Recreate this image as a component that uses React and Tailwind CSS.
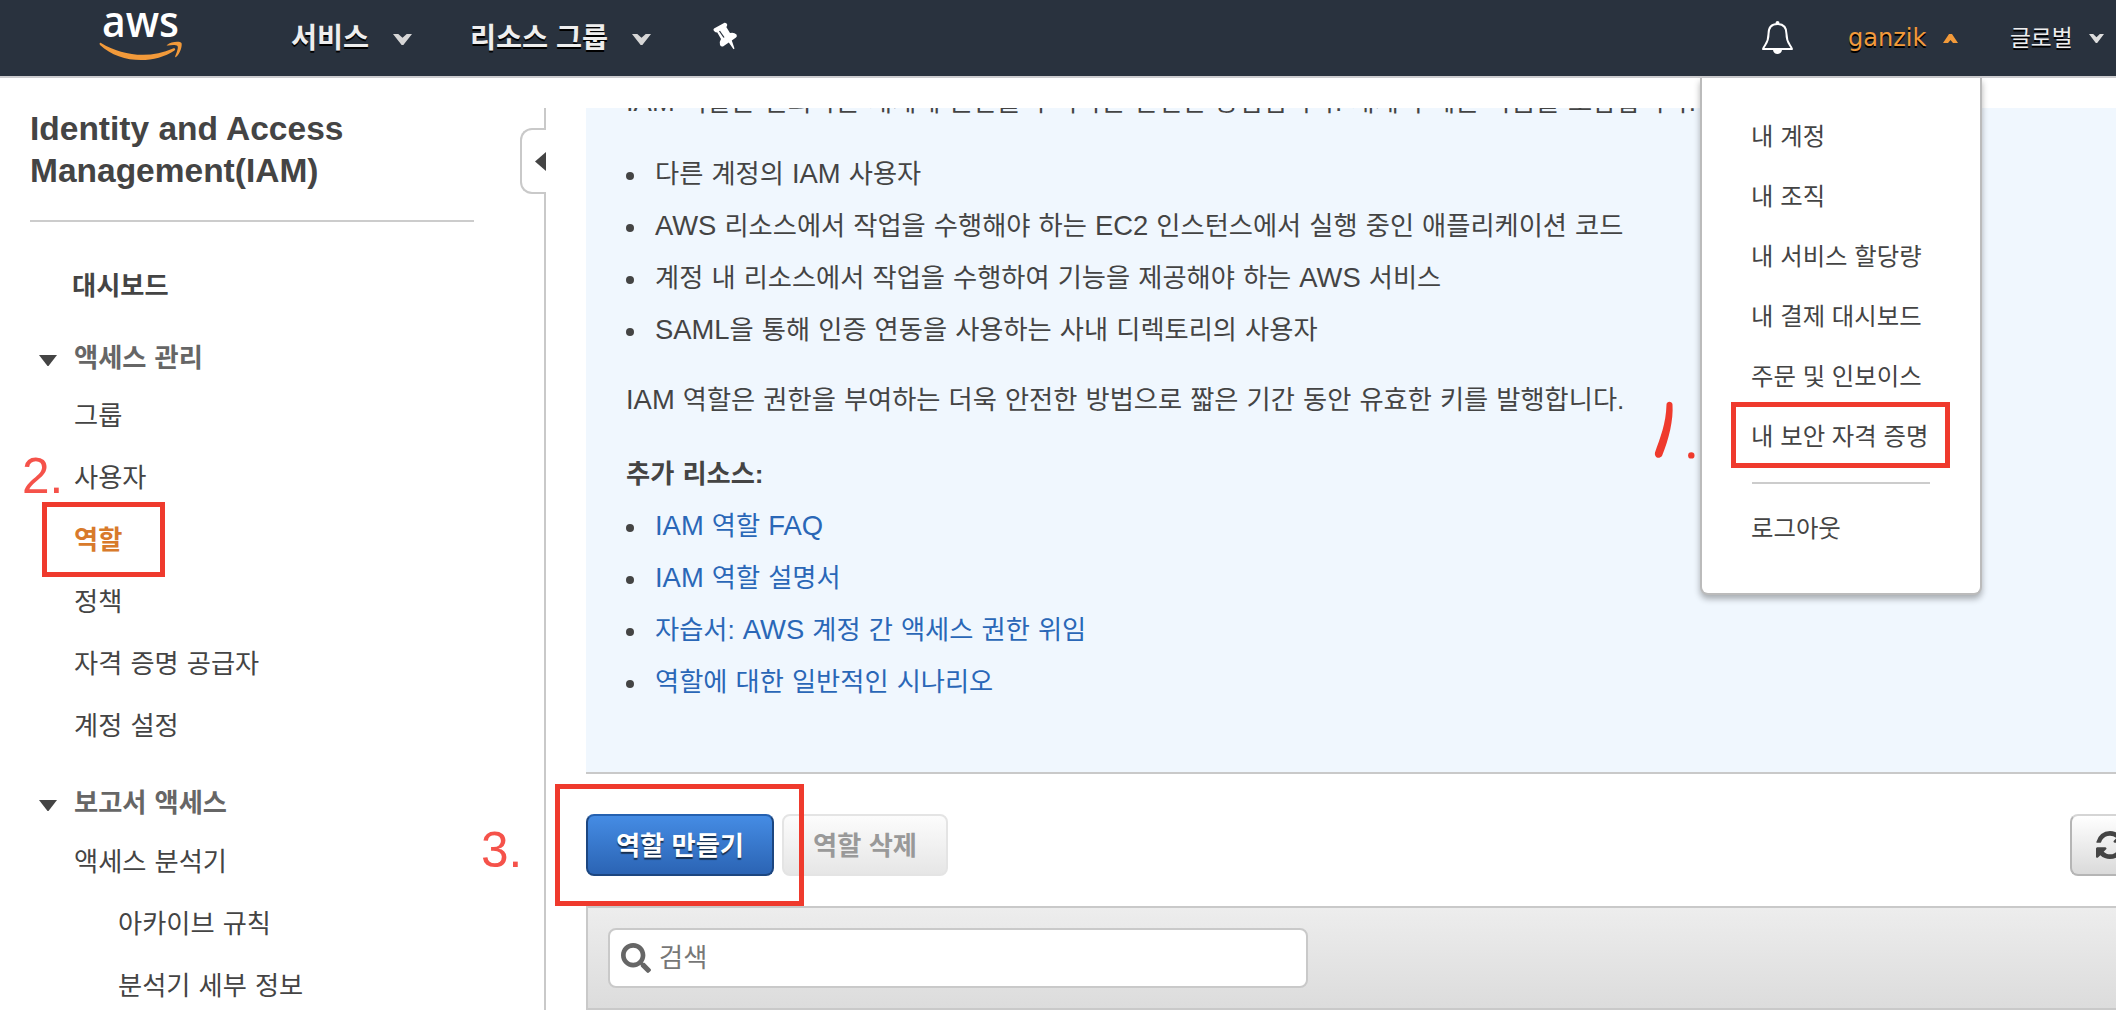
import React from "react";
import { FaSearch } from "react-icons/fa";

const sans = "font-['Liberation_Sans','Noto_Sans_CJK_KR',sans-serif]";

/* Latin runs are set slightly larger than the Hangul around them. */
function Mixed({ children }) {
  return children.split(/([A-Za-z0-9]+)/).map((run, i) =>
    i % 2 ? (
      <span key={i} className="text-[27.400px] leading-none">
        {run}
      </span>
    ) : (
      run
    )
  );
}

function AwsLogo() {
  return (
    <svg className="h-[54px] w-[90px] overflow-visible" viewBox="96 8 90 54">
      <text x="102" y="36.5" textLength="77" lengthAdjust="spacingAndGlyphs" fontFamily="Open Sans" fontWeight="600" fontSize="44" fill="#fff">
        aws
      </text>
      <path d="M101 43 C122 56 150 59 173 48.500 C175 47.600 176 49 174.500 50.500 C153 65 119 63 100 45 C99 43.500 100 42.500 101 43 Z" fill="#f29a3a" />
      <path d="M167 45 C171 41.500 180 41 181.500 43 C182.500 46 180 54 176 57 C175 57.500 175 57 175.300 56 C177 52 178.500 47.500 177.500 46 C176 44.500 171 45 168 45.500 C166.500 45.700 166.500 45.300 167 45 Z" fill="#f29a3a" />
    </svg>
  );
}

function Notch({ className, fill = "#d6d6d6" }) {
  return (
    <svg className={className} viewBox="0 0 18 10" preserveAspectRatio="none">
      <path d="M0 0 H5 L9 3.500 L13 0 H18 L9.800 10 H8.200 Z" fill={fill} />
    </svg>
  );
}

function Pin() {
  return (
    <svg className="h-[28px] w-[26px]" viewBox="712 22 26 28">
      <path d="M724.500 22.800 Q726.500 22.500 727.200 24.500 Q727.300 26 726.300 27 L730 33 Q734 32 736.500 34.500 Q737.500 36.500 736 37.500 L731.800 40.500 L734.500 48.500 L733.500 49.200 L728.800 42.500 L723 46.500 Q721 47 720 45 Q719 42 721 39 L717.300 32.500 Q715.500 32.500 714 31 Q712.800 29.500 714 28.500 Z" fill="#fff" />
      <path d="M719.500 31 L724 37.500" stroke="#29323e" strokeWidth="1.300" />
    </svg>
  );
}

function Bell() {
  return (
    <svg className="h-[36px] w-[34px]" viewBox="1761 19 34 36" fill="none">
      <path d="M1777.500 23 C1770 23 1768.500 28 1768.500 33 C1768.500 42 1765 43 1763 48 H1792 C1790 43 1786.500 42 1786.500 33 C1786.500 28 1785 23 1777.500 23 Z" stroke="#fff" strokeWidth="2" strokeLinejoin="round" />
      <circle cx="1777.500" cy="21.800" r="1.900" fill="#fff" />
      <path d="M1773 49 A4.600 5 0 0 0 1782 49 Z" fill="#fff" />
    </svg>
  );
}

function Header() {
  return (
    <header className="flex h-[78px] shrink-0 items-center border-b-2 border-[#cccccf] bg-[#29323e] text-[#eee]">
      <div className="mb-[6px] ml-24 w-[195px]">
        <AwsLogo />
      </div>
      <div className="flex w-[179px] items-center text-[28.300px] font-bold [text-shadow:0_2px_0_#000]">
        <span>서비스</span>
        <Notch className="ml-6 mt-0.5 h-[11px] w-[19px]" />
      </div>
      <div className="flex w-[242px] items-center text-[28.300px] font-bold [text-shadow:0_2px_0_#000]">
        <span>리소스 그룹</span>
        <Notch className="ml-6 mt-0.5 h-[11px] w-[19px]" />
      </div>
      <div className="mb-1">
        <Pin />
      </div>
      <div className="ml-auto flex w-[355px] items-center">
        <Bell />
        <span className="ml-[53px] w-[95px] font-['DejaVu_Sans'] text-[24px] text-[#f29a3a] [text-shadow:0_2px_0_#000]">ganzik</span>
        <svg className="h-[9px] w-[15px]" viewBox="0 0 15 9">
          <path d="M6 0 H9 L15 9 H10 L7.500 6 L5 9 H0 Z" fill="#f29a3a" />
        </svg>
        <span className="ml-[52px] w-[79px] text-[22.700px] [text-shadow:0_2px_0_#000]">글로벌</span>
        <Notch className="h-[9px] w-[15px]" fill="#ddd" />
      </div>
    </header>
  );
}

function Triangle() {
  return (
    <svg className="mr-[17px] mt-1 h-[11px] w-[18px]" viewBox="0 0 18 11">
      <path d="M0 0 H18 L9.500 11 H8.500 Z" fill="#444" />
    </svg>
  );
}

function NavItem({ children, className = "" }) {
  return <li className={`flex h-[62px] items-center pl-[74px] ${className}`}>{children}</li>;
}

function NavGroup({ children }) {
  return (
    <h2 className="flex h-[56px] items-center pl-[39px] font-bold text-[#666]">
      <Triangle />
      {children}
    </h2>
  );
}

function Sidebar() {
  return (
    <aside className="relative flex w-[546px] shrink-0 flex-col text-[26.250px] leading-[36px] [word-spacing:0.800px]">
      <h1 className="ml-[30px] w-[444px] shrink-0 border-b-2 border-[#ccc] pb-[28px] text-[33.500px] font-bold leading-[42px] [word-spacing:0]">
        Identity and Access
        <br />
        Management(IAM)
      </h1>
      <div className="mt-[33px] flex h-[62px] shrink-0 items-center pl-[72px] font-bold">대시보드</div>
      <div className="mt-[13px] shrink-0">
        <NavGroup>액세스 관리</NavGroup>
      </div>
      <ul className="-mt-px shrink-0">
        <NavItem>그룹</NavItem>
        <NavItem>사용자</NavItem>
        <NavItem className="font-bold text-[#d87a2b]">역할</NavItem>
        <NavItem>정책</NavItem>
        <NavItem>자격 증명 공급자</NavItem>
        <NavItem>계정 설정</NavItem>
      </ul>
      <div className="mt-[18px] shrink-0">
        <NavGroup>보고서 액세스</NavGroup>
      </div>
      <ul className="shrink-0">
        <NavItem>액세스 분석기</NavItem>
        <NavItem className="pl-[118px]">아카이브 규칙</NavItem>
        <NavItem className="pl-[118px]">분석기 세부 정보</NavItem>
      </ul>
      <div className="absolute right-0 top-0 flex h-full w-[26px] flex-col items-end">
        <div className="h-[20px] w-0.5 shrink-0 bg-[#c9c9c9]" />
        <div className="flex h-[66px] w-[26px] shrink-0 items-center justify-end rounded-l-xl border-2 border-r-0 border-[#c9c9c9]">
          <svg className="h-[19px] w-[11px]" viewBox="0 0 11 19">
            <path d="M11 0 V19 L0 9.500 Z" fill="#444" />
          </svg>
        </div>
        <div className="w-0.5 grow bg-[#c9c9c9]" />
      </div>
      <Note className="left-[22px] top-[338px]">2.</Note>
      <Note className="left-[481px] top-[712px]">3.</Note>
      <Frame className="left-[42px] top-[394px] h-[75px] w-[123px]" />
    </aside>
  );
}

function Note({ children, className }) {
  return <span className={`absolute text-[49.500px] leading-[60px] text-[#f5524a] ${className}`}>{children}</span>;
}

function Frame({ className }) {
  return <div className={`pointer-events-none absolute border-5 border-[#ef3a2d] ${className}`} />;
}

function Bullets({ items, className = "" }) {
  return (
    <ul className={className}>
      {items.map((t) => (
        <li key={t} className="flex h-[52px] items-center">
          <span className="mr-[21px] mt-[3px] size-2 rounded-full bg-[#444]" />
          <span>
            <Mixed>{t}</Mixed>
          </span>
        </li>
      ))}
    </ul>
  );
}

function Info() {
  return (
    <section className="h-[666px] shrink-0 overflow-hidden border-b-2 border-[#c9c9c9] bg-[#f0f7fe] pl-[40px] text-[26.250px] leading-[36px] [word-spacing:0.800px]">
      <p className="-mt-[24px] h-[36px]">
        <Mixed>IAM 역할은 신뢰하는 개체에 권한을 부여하는 안전한 방법입니다. 개체의 예는 다음을 포함합니다.</Mixed>
      </p>
      <Bullets
        className="mt-[28px]"
        items={[
          "다른 계정의 IAM 사용자",
          "AWS 리소스에서 작업을 수행해야 하는 EC2 인스턴스에서 실행 중인 애플리케이션 코드",
          "계정 내 리소스에서 작업을 수행하여 기능을 제공해야 하는 AWS 서비스",
          "SAML을 통해 인증 연동을 사용하는 사내 디렉토리의 사용자",
        ]}
      />
      <p className="mt-[26px] h-[36px]">
        <Mixed>IAM 역할은 권한을 부여하는 더욱 안전한 방법으로 짧은 기간 동안 유효한 키를 발행합니다.</Mixed>
      </p>
      <p className="mt-[38px] h-[36px] font-bold">추가 리소스:</p>
      <Bullets
        className="mt-[8px] [&_li>span:last-child]:text-[#2a67b7]"
        items={["IAM 역할 FAQ", "IAM 역할 설명서", "자습서: AWS 계정 간 액세스 권한 위임", "역할에 대한 일반적인 시나리오"]}
      />
    </section>
  );
}

function Actions() {
  return (
    <div className="relative flex h-[132px] shrink-0 items-center text-[26.250px] font-bold">
      <button className="mt-[10px] flex h-[62px] w-[188px] items-center justify-center rounded-lg border-2 border-[#1c4680] border-t-[#2561b0] bg-linear-to-b from-[#458ce4] to-[#2b64b4] pt-[3px] text-white [text-shadow:0_2px_1px_rgba(0,0,0,0.600)]">
        역할 만들기
      </button>
      <button className="ml-2 mt-[10px] flex h-[62px] w-[166px] items-center justify-center rounded-lg border-2 border-[#e4e4e4] bg-linear-to-b from-[#fcfcfc] to-[#e6e6e6] pt-[3px] text-[#999]">
        역할 삭제
      </button>
      <button className="ml-auto mt-[10px] flex h-[62px] w-[46px] items-center overflow-hidden rounded-l-lg border-2 border-r-0 border-[#b5b5b5] border-t-[#d5d5d5] bg-linear-to-b from-white to-[#dadada] pl-6">
        <svg className="size-[28px] shrink-0" viewBox="0 0 1536 1536" fill="#444">
          <path d="M1511 928q0 5-1 7-64 268-268 434.500t-478 166.500q-146 0-282.500-55t-243.500-157l-129 129q-19 19-45 19t-45-19-19-45v-448q0-26 19-45t45-19h448q26 0 45 19t19 45-19 45l-137 137q71 66 161 102t187 36q134 0 250-65t186-179q11-17 53-117 8-23 30-23h192q13 0 22.500 9.500t9.500 22.500zm25-800v448q0 26-19 45t-45 19h-448q-26 0-45-19t-19-45 19-45l138-138q-148-137-349-137-134 0-250 65t-186 179q-11 17-53 117-8 23-30 23h-199q-13 0-22.500-9.500t-9.500-22.500v-7q65-268 270-434.500t480-166.500q146 0 284 55.500t245 156.500l130-129q19-19 45-19t45 19 19 45z" />
        </svg>
      </button>
      <Frame className="-left-[31px] top-[10px] h-[122px] w-[249px]" />
    </div>
  );
}

function FilterBar() {
  return (
    <div className="h-[104px] shrink-0 border-y-2 border-l-2 border-[#c9c9c9] bg-linear-to-b from-[#ededed] to-[#dcdcdc] pl-5 pt-5">
      <div className="flex h-[60px] w-[700px] items-center rounded-lg border-2 border-[#c9c9c9] bg-white pl-[11px] text-[26.250px] text-[#777]">
        <FaSearch className="mr-[8px] size-[30px] text-[#666]" />
        <span className="mt-0.5">검색</span>
      </div>
    </div>
  );
}

function AccountMenu() {
  const items = ["내 계정", "내 조직", "내 서비스 할당량", "내 결제 대시보드", "주문 및 인보이스", "내 보안 자격 증명"];
  return (
    <div className="absolute left-[1700px] top-[78px] h-[517px] w-[282px] rounded-b-lg border-2 border-t-0 border-[#bbb] bg-white px-[49px] pt-[29px] text-[24.400px] leading-[60px] shadow-[0_4px_6px_rgba(0,0,0,0.300)]">
      {items.map((t) => (
        <div key={t} className="h-[60px] whitespace-nowrap">
          {t}
        </div>
      ))}
      <div className="ml-px mt-[15px] h-0.5 w-[178px] bg-[#ccc]" />
      <div className="mt-[15px]">로그아웃</div>
      <Frame className="left-[29px] top-[324px] h-[66px] w-[219px]" />
    </div>
  );
}

function HandDrawnOne() {
  return (
    <svg className="absolute left-[1650px] top-[396px] h-[68px] w-[50px]" viewBox="1650 396 50 68">
      <path d="M1666.500 404.500 C1666.700 400.800 1672.200 400.800 1672.500 404.500 C1673.500 420 1669 439 1662 456 C1659 459.500 1654 457.500 1655 452.500 C1660 438 1666 424 1666.500 404.500 Z" fill="#ef3a2d" />
      <circle cx="1691.300" cy="455.400" r="3.200" fill="#ef3a2d" />
    </svg>
  );
}

export default function App() {
  return (
    <div className={`relative flex h-[1010px] w-[2116px] flex-col overflow-hidden bg-white text-[#444] ${sans}`}>
      <Header />
      <div className="flex grow overflow-hidden pt-[30px]">
        <Sidebar />
        <main className="ml-[40px] flex grow flex-col">
          <Info />
          <Actions />
          <FilterBar />
        </main>
      </div>
      <AccountMenu />
      <HandDrawnOne />
    </div>
  );
}
